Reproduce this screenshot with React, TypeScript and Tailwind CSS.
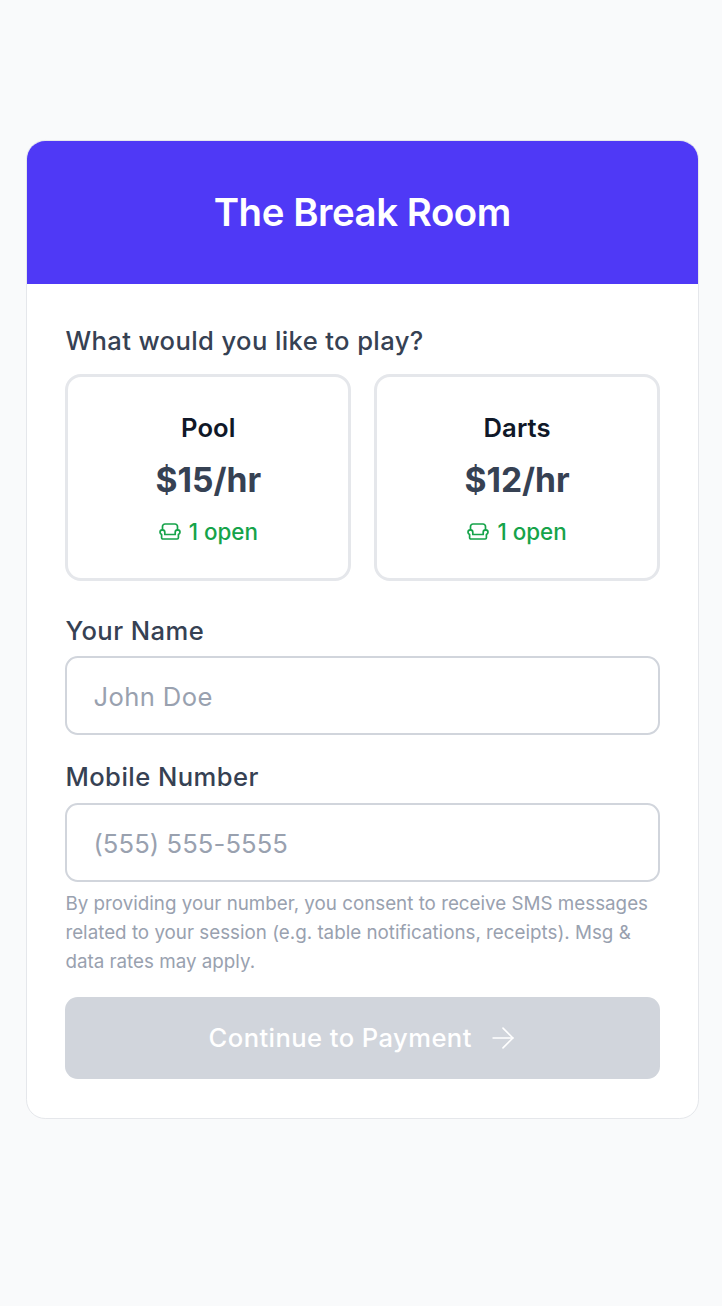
import { ArrowRight } from "lucide-react";

const games = [
  { name: "Pool", price: "$15/hr" },
  { name: "Darts", price: "$12/hr" },
];

function ChairIcon() {
  return (
    <svg width="22" height="18" viewBox="0 0 22 18" fill="none" stroke="currentColor" strokeWidth="1.7" strokeLinecap="round" strokeLinejoin="round">
      <path d="M3.5 7V3.5a2.5 2.5 0 0 1 2.5-2.5h10a2.5 2.5 0 0 1 2.5 2.5V7" />
      <path d="M1 9.2a2.4 2.4 0 0 1 4.8 0v2.3h10.4V9.2a2.4 2.4 0 0 1 4.8 0c0 1-.8 1.9-1.6 2.3v3.3a1.2 1.2 0 0 1-1.2 1.2H3.8a1.2 1.2 0 0 1-1.2-1.2v-3.3C1.8 11.1 1 10.2 1 9.2z" />
    </svg>
  );
}

export default function App() {
  return (
    <div className="min-h-[1306px] bg-[#f9fafb] pl-[26px] pt-[140px] font-['Inter',sans-serif]">
      <div className="w-[672.6px] overflow-hidden rounded-[19.2px] border-[1.6px] border-[#e5e7eb] bg-white">
        <div className="flex h-[143px] items-center justify-center bg-[#4f39f6]">
          <h1 className="text-[38.4px] font-[570] tracking-[-0.45px] text-white">The Break Room</h1>
        </div>

        <div className="pl-[38.4px] pr-[37.6px] pt-[38.4px] pb-[39.4px]">
          <p className="text-[25.6px] leading-[38px] font-[470] tracking-[0.38px] text-[#364153]">What would you like to play?</p>
          <div className="mt-[14px] grid grid-cols-2 gap-[23px]">
            {games.map((game) => (
              <div key={game.name} className="flex h-[207px] flex-col items-center rounded-[16px] border-[3.2px] border-[#e5e7eb] bg-white pt-[32px]">
                <div className="text-[25.6px] leading-[38px] font-semibold tracking-[0.1px] text-[#101828]">{game.name}</div>
                <div className="mt-[9px] text-[33.6px] leading-[48px] font-bold text-[#364153]">{game.price}</div>
                <div className="mt-[12px] flex items-center gap-[8px] text-[22.4px] leading-[32px] font-[450] text-[#16a34a]">
                  <ChairIcon />
                  1 open
                </div>
              </div>
            ))}
          </div>

          <label className="mt-[31px] block text-[25.6px] leading-[38px] font-[470] tracking-[0.45px] text-[#364153]">Your Name</label>
          <div className="mt-[6px] flex h-[79px] items-center rounded-[12.8px] border-[2px] border-[#d1d5dc] px-[26px] pt-[2px] text-[25.6px] tracking-[0.4px] text-[#99a1af]">John Doe</div>

          <label className="mt-[23px] block text-[25.6px] leading-[38px] font-[470] tracking-[0.45px] text-[#364153]">Mobile Number</label>
          <div className="mt-[7px] flex h-[79px] items-center rounded-[12.8px] border-[2px] border-[#d1d5dc] px-[26px] pt-[2px] text-[25.6px] tracking-[0.1px] text-[#99a1af]">(555) 555-5555</div>

          <p className="mt-[8px] text-[18.8px] leading-[28.8px] text-[#99a1af]">
            By providing your number, you consent to receive SMS messages related to your session (e.g. table notifications, receipts). Msg &amp; data rates may apply.
          </p>

          <button className="mt-[20px] flex h-[82px] w-full items-center justify-center gap-[14px] rounded-[12.8px] bg-[#d1d5dc] pl-[3px] text-[25.6px] font-[450] tracking-[0.42px] text-white">
            Continue to Payment
            <ArrowRight size={34} strokeWidth={1.15} />
          </button>
        </div>
      </div>
    </div>
  );
}
